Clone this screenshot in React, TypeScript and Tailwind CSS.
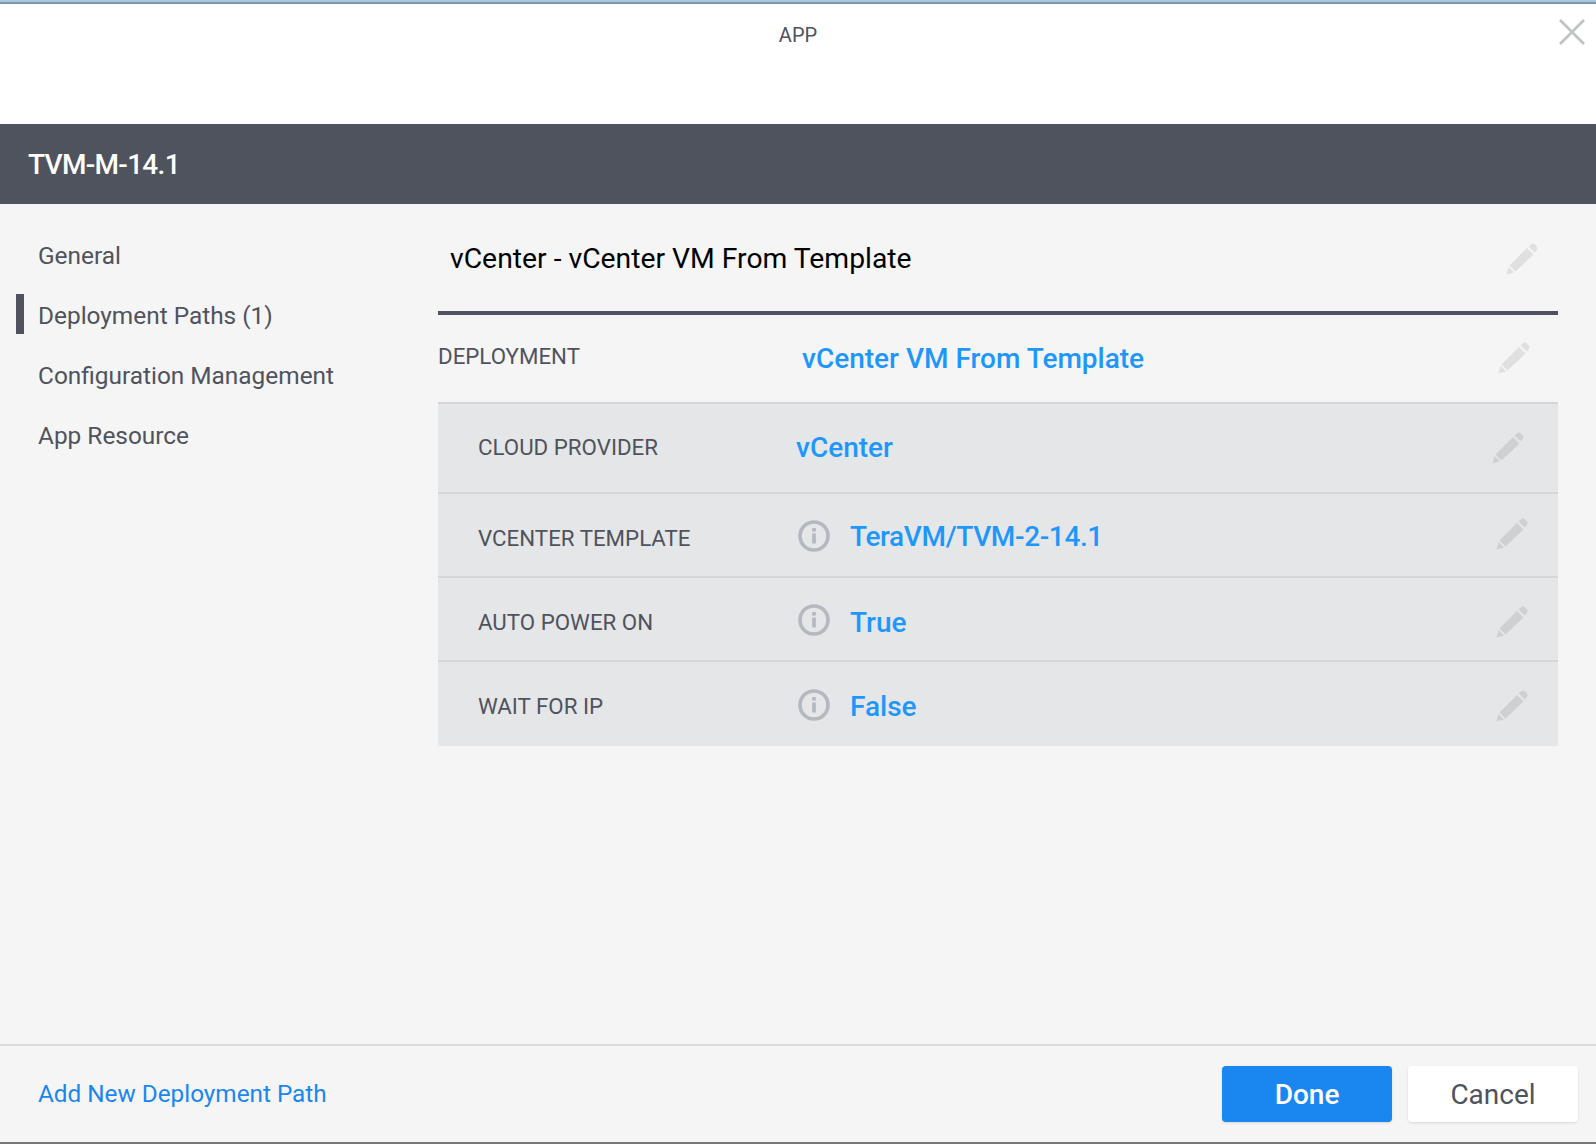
import React from "react";

function Pencil({ fill = "#e0e0e0" }: { fill?: string }) {
  return (
    <svg width="32" height="32" viewBox="0 0 32 32" className="shrink-0 blur-[0.5px]">
      <path d="M0.5 31.5 L2.5 24 L8 29.5 Z" fill={fill} />
      <path d="M3.5 22.5 L21 5 L27.5 11.5 L9.5 28.5 Z" fill={fill} />
      <path d="M22.5 3.5 L25.5 1 Q27 0 28.5 1 L31 3.5 Q32 5 31 6.5 L29 9.5 Z" fill={fill} />
    </svg>
  );
}

function Info() {
  return (
    <svg width="32" height="32" viewBox="0 0 32 32" className="shrink-0 blur-[0.5px]">
      <circle cx="16" cy="16" r="14" fill="none" stroke="#b4b8bf" strokeWidth="3.6" />
      <rect x="14.2" y="13.5" width="3.6" height="10" fill="#b4b8bf" />
      <rect x="14.2" y="8" width="3.6" height="3.6" fill="#b4b8bf" />
    </svg>
  );
}

const rows = [
  { label: "CLOUD PROVIDER", value: "vCenter", info: false, h: "h-[90px] pt-0 pr-[34px]", lw: "w-[318px]", lab: "", vt: "", pen: "" },
  { label: "VCENTER TEMPLATE", value: "TeraVM/TVM-2-14.1", info: true, h: "h-[84px] pt-[5px] pr-[30px]", lw: "w-[320px]", lab: "pt-0.5", vt: "tracking-[-0.36px] pb-0.5", pen: "-mt-2" },
  { label: "AUTO POWER ON", value: "True", info: true, h: "h-[84px] pt-[5px] pr-[30px]", lw: "w-[320px]", lab: "pt-0.5", vt: "pt-0.5", pen: "mt-0" },
  { label: "WAIT FOR IP", value: "False", info: true, h: "h-[86px] pt-[5px] pr-[30px]", lw: "w-[320px]", lab: "", vt: "", pen: "-mt-0.5" },
];

const nav = ["General", "Deployment Paths (1)", "Configuration Management", "App Resource"];

export default function App() {
  return (
    <div className="flex h-[1144px] w-[1596px] flex-col overflow-hidden bg-[#f5f5f5] font-['Roboto',sans-serif] text-[#4f535d]">
      <div className="h-1 shrink-0 border-b-2 border-[#7f97ad] bg-[#a9c4de]" />
      <header className="grid h-[120px] shrink-0 grid-cols-[1fr_auto_1fr] items-start bg-white pt-[15px] pr-[11px] pl-[11px]">
        <div />
        <div className="mt-[5px] text-[20px] leading-[22px]">APP</div>
        <svg width="26" height="26" viewBox="0 0 26 26" className="justify-self-end blur-[0.5px]">
          <path d="M1 1 L25 25 M25 1 L1 25" stroke="#c0c3c9" strokeWidth="2.8" fill="none" />
        </svg>
      </header>
      <div className="flex h-20 shrink-0 items-center bg-[#4f535d] pt-0.5 pl-7 text-[28px] font-medium tracking-[-0.7px] text-white">TVM-M-14.1</div>
      <main className="flex min-h-0 flex-1">
        <nav className="flex w-[438px] shrink-0 flex-col gap-5 pt-[30px] pl-4">
          {nav.map((n, i) => (
            <div
              key={n}
              className={`flex h-10 items-center border-l-8 pt-1 pl-[14px] text-[24.4px] ${i === 1 ? "border-[#4f535d]" : "border-transparent"}`}
            >
              {n}
            </div>
          ))}
        </nav>
        <section className="mr-[38px] flex-1">
          <div className="flex h-[111px] items-center justify-between border-b-4 border-[#4f535d] pt-[3px] pr-[20px] pl-3">
            <h2 className="pt-px text-[28.3px] text-black">vCenter - vCenter VM From Template</h2>
            <Pencil />
          </div>
          <div className="flex h-[87px] items-center pr-[28px]">
            <span className="w-[364px] shrink-0 pb-1 text-[22.3px]">DEPLOYMENT</span>
            <span className="flex-1 text-[28px] font-medium text-[#1f97fa]">vCenter VM From Template</span>
            <span className="-mt-0.5">
              <Pencil />
            </span>
          </div>
          {rows.map((r) => (
            <div key={r.label} className={`flex items-center border-t-2 border-[#d4d5d8] bg-[#e5e6e8] pl-10 ${r.h}`}>
              <span className={`shrink-0 text-[22.3px] ${r.lw} ${r.lab}`}>{r.label}</span>
              {r.info && (
                <span className="mr-5 -mt-1">
                  <Info />
                </span>
              )}
              <span className={`flex-1 text-[28px] font-medium text-[#1f97fa] ${r.vt}`}>{r.value}</span>
              <span className={r.pen}>
                <Pencil fill="#cfd0d2" />
              </span>
            </div>
          ))}
        </section>
      </main>
      <footer className="flex h-[98px] shrink-0 items-center justify-between border-t-2 border-[#dcdcdc] pr-[18px] pl-[38px]">
        <a className="text-[24.3px] text-[#1a86ef]">Add New Deployment Path</a>
        <div className="flex gap-4">
          <button className="h-14 w-[170px] rounded bg-[#1a86ef] pt-0.5 text-[28px] font-medium text-white shadow-sm">Done</button>
          <button className="h-14 w-[170px] rounded bg-white pt-0.5 text-[28px] shadow-sm">Cancel</button>
        </div>
      </footer>
      <div className="h-0.5 shrink-0 bg-[#777777]" />
    </div>
  );
}
